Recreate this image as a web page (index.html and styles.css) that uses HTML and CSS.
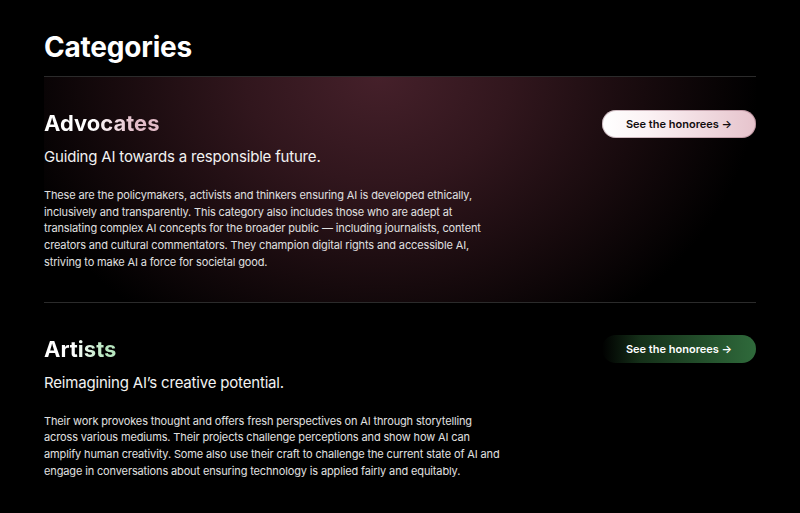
FILE: index.html
```html
<!DOCTYPE html>
<html lang="en">
<head>
<meta charset="utf-8">
<title>Categories</title>
<link rel="stylesheet" href="styles.css">
</head>
<body>
<main class="page">
  <h1 class="title">Categories</h1>

  <section class="cat cat--advocates">
    <div class="cat-head">
      <h2 class="cat-name cat-name--pink">Advocates</h2>
      <a class="btn btn--light" href="#">See the honorees →</a>
    </div>
    <p class="tagline">Guiding AI towards a responsible future.</p>
    <p class="desc">These are the policymakers, activists and thinkers ensuring AI is developed ethically, inclusively and transparently. This category also includes those who are adept at translating complex AI concepts for the broader public — including journalists, content creators and cultural commentators. They champion digital rights and accessible AI, striving to make AI a force for societal good.</p>
  </section>

  <section class="cat cat--artists">
    <div class="cat-head">
      <h2 class="cat-name cat-name--green">Artists</h2>
      <a class="btn btn--green" href="#">See the honorees →</a>
    </div>
    <p class="tagline">Reimagining AI’s creative potential.</p>
    <p class="desc">Their work provokes thought and offers fresh perspectives on AI through storytelling across various mediums. Their projects challenge perceptions and show how AI can amplify human creativity. Some also use their craft to challenge the current state of AI and engage in conversations about ensuring technology is applied fairly and equitably.</p>
  </section>
</main>
</body>
</html>
```

FILE: styles.css
```css
html, body {
  margin: 0;
  padding: 0;
  background: #000;
  color: #fff;
  font-family: Inter, "Noto Sans", "Liberation Sans", sans-serif;
}

.page {
  padding: 0 44px;
  overflow: hidden;
}

.title {
  margin: 30px 0 12px;
  font-size: 28px;
  line-height: 34px;
  font-weight: 700;
  letter-spacing: -0.2px;
}

.cat {
  border-top: 1px solid #2b2b2b;
  padding: 32px 0 31px;
}

.cat--advocates {
  background: radial-gradient(ellipse 380px 300px at 47% 0%, #45202a 0%, #31161d 35%, #170a0d 70%, rgba(0, 0, 0, 0) 100%);
}

.cat-head {
  display: flex;
  align-items: center;
  justify-content: space-between;
}

.cat-name {
  margin: 0;
  font-size: 22px;
  line-height: 29px;
  font-weight: 700;
  -webkit-background-clip: text;
  background-clip: text;
  color: transparent;
}

.cat-name--pink {
  background-image: linear-gradient(90deg, #fff 0%, #fff 40%, #e2bcc8 80%, #e2bcc8 100%);
}

.cat-name--green {
  background-image: linear-gradient(90deg, #fff 0%, #fff 40%, #b7e6bf 85%, #b7e6bf 100%);
}

.btn {
  display: flex;
  align-items: center;
  justify-content: center;
  width: 154px;
  height: 28px;
  box-sizing: border-box;
  border-radius: 14px;
  font-size: 11px;
  font-weight: 600;
  text-decoration: none;
}

.btn--light {
  color: #120c0e;
  background: linear-gradient(90deg, #ffffff 0%, #fbf2f4 30%, #e6c3cc 100%);
  box-shadow: inset 0 0 0 1px rgba(120, 70, 85, 0.35);
}

.btn--green {
  color: #fff;
  background: linear-gradient(90deg, rgba(0, 0, 0, 0) 0%, #153019 25%, #2f6a3b 100%);
}

.tagline {
  margin: 7px 0 0;
  font-size: 15px;
  line-height: 24px;
  letter-spacing: -0.0125em;
  color: #f2f2f2;
}

.desc {
  margin: 18px 0 0;
  max-width: 460px;
  font-size: 11px;
  line-height: 16.7px;
  letter-spacing: -0.0125em;
  color: #e0e0e0;
}
```
